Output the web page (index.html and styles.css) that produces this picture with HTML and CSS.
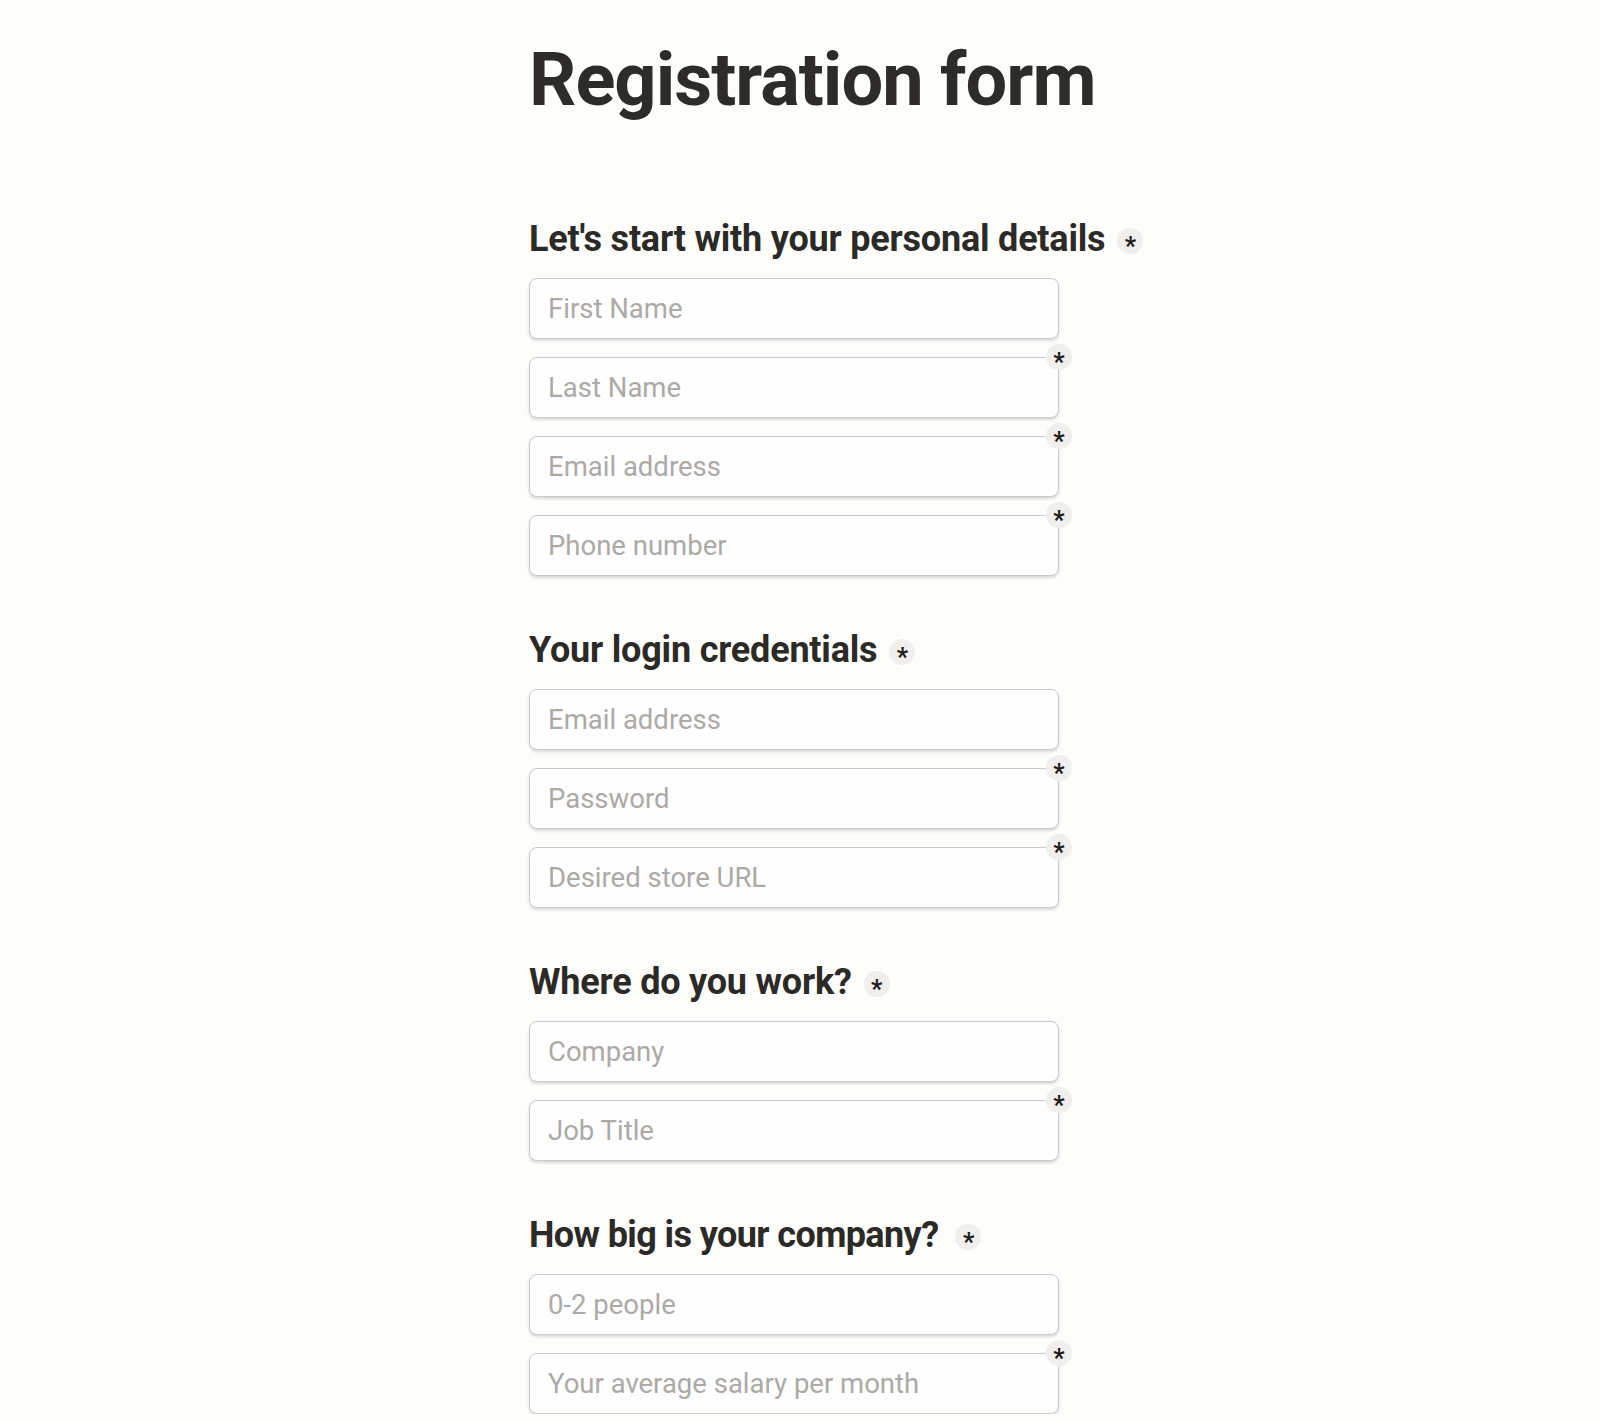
FILE: index.html
```html
<!DOCTYPE html>
<html lang="en">
<head>
<meta charset="utf-8">
<title>Registration form</title>
<link rel="stylesheet" href="styles.css">
</head>
<body>
<main class="page">
  <h1 class="title">Registration form</h1>

  <section class="group">
    <h2 class="group-title">Let's start with your personal details<span class="req req-inline">*</span></h2>
    <div class="fields">
      <div class="field"><input class="input" type="text" placeholder="First Name"></div>
      <div class="field"><input class="input" type="text" placeholder="Last Name"><span class="req req-corner">*</span></div>
      <div class="field"><input class="input" type="email" placeholder="Email address"><span class="req req-corner">*</span></div>
      <div class="field"><input class="input" type="tel" placeholder="Phone number"><span class="req req-corner">*</span></div>
    </div>
  </section>

  <section class="group">
    <h2 class="group-title">Your login credentials<span class="req req-inline">*</span></h2>
    <div class="fields">
      <div class="field"><input class="input" type="email" placeholder="Email address"></div>
      <div class="field"><input class="input" type="password" placeholder="Password"><span class="req req-corner">*</span></div>
      <div class="field"><input class="input" type="text" placeholder="Desired store URL"><span class="req req-corner">*</span></div>
    </div>
  </section>

  <section class="group">
    <h2 class="group-title">Where do you work?<span class="req req-inline">*</span></h2>
    <div class="fields">
      <div class="field"><input class="input" type="text" placeholder="Company"></div>
      <div class="field"><input class="input" type="text" placeholder="Job Title"><span class="req req-corner">*</span></div>
    </div>
  </section>

  <section class="group">
    <h2 class="group-title group-title-tight">How big is your company?<span class="req req-inline req-wide">*</span></h2>
    <div class="fields">
      <div class="field"><input class="input" type="text" placeholder="0-2 people"></div>
      <div class="field"><input class="input" type="text" placeholder="Your average salary per month"><span class="req req-corner">*</span></div>
    </div>
  </section>
</main>
</body>
</html>
```

FILE: styles.css
```css
* {
  box-sizing: border-box;
}

html, body {
  margin: 0;
  padding: 0;
  background: #fdfdfc;
}

body {
  font-family: Roboto, "Liberation Sans", sans-serif;
  color: #2b2a26;
}

.page {
  width: 542px;
  margin: 0 auto;
  padding: 37px 0 0;
}

.title {
  margin: 0;
  font-size: 74px;
  line-height: 86px;
  font-weight: 700;
  letter-spacing: -1px;
  white-space: nowrap;
  color: #2e2c28;
}

.group {
  margin-top: 53px;
}

.group:first-of-type {
  margin-top: 95px;
}

.group-title {
  margin: 0 0 18px;
  font-size: 36px;
  line-height: 42px;
  font-weight: 700;
  letter-spacing: -0.2px;
  white-space: nowrap;
  color: #2b2a26;
}

.group-title-tight {
  letter-spacing: -0.6px;
}

.fields {
  display: flex;
  flex-direction: column;
  gap: 18px;
  width: 530px;
}

.field {
  position: relative;
}

.input {
  display: block;
  width: 100%;
  height: 61px;
  padding: 0 18px;
  border: 1px solid #cccac7;
  border-radius: 8px;
  background: #fefefe;
  box-shadow: 0 2px 3px rgba(0, 0, 0, 0.14);
  font-family: Roboto, "Liberation Sans", sans-serif;
  font-size: 27.5px;
  color: #2b2a26;
  outline: none;
}

.input::placeholder {
  color: #acaaa7;
}

.req {
  display: inline-flex;
  align-items: center;
  justify-content: center;
  width: 26px;
  height: 26px;
  border-radius: 50%;
  background: #f0efed;
  font-size: 25px;
  font-weight: 700;
  line-height: 1;
  padding-top: 10px;
  color: #1f1e1b;
}

.req-inline {
  margin-left: 12px;
  vertical-align: middle;
}

.req-wide {
  margin-left: 17px;
}

.req-corner {
  position: absolute;
  top: -13px;
  right: -13px;
}
```
